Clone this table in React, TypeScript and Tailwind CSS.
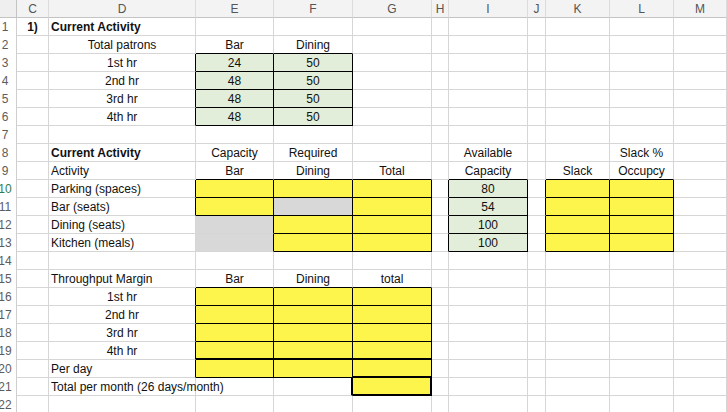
import React from 'react';

type Fill = 'y' | 'g' | 'x';
type Cell = { t?: string; a?: 'l' | 'c'; b?: boolean; f?: Fill };
type Row = Partial<Record<string, Cell>>;

const COLS = ['C', 'D', 'E', 'F', 'G', 'H', 'I', 'J', 'K', 'L', 'M'];

const c = (t: string, extra: Partial<Cell> = {}): Cell => ({ t, a: 'c', ...extra });
const l = (t: string, extra: Partial<Cell> = {}): Cell => ({ t, a: 'l', ...extra });
const Y: Cell = { f: 'y' };
const G: Cell = { f: 'x' };

// rows 1..22
const rows: Row[] = [
  { C: c('1)', { b: true }), D: l('Current Activity', { b: true }) },
  { D: c('Total patrons'), E: c('Bar'), F: c('Dining') },
  { D: c('1st hr'), E: c('24', { f: 'g' }), F: c('50', { f: 'g' }) },
  { D: c('2nd hr'), E: c('48', { f: 'g' }), F: c('50', { f: 'g' }) },
  { D: c('3rd hr'), E: c('48', { f: 'g' }), F: c('50', { f: 'g' }) },
  { D: c('4th hr'), E: c('48', { f: 'g' }), F: c('50', { f: 'g' }) },
  {},
  { D: l('Current Activity', { b: true }), E: c('Capacity'), F: c('Required'), I: c('Available'), L: c('Slack %') },
  { D: l('Activity'), E: c('Bar'), F: c('Dining'), G: c('Total'), I: c('Capacity'), K: c('Slack'), L: c('Occupcy') },
  { D: l('Parking (spaces)'), E: Y, F: Y, G: Y, I: c('80', { f: 'g' }), K: Y, L: Y },
  { D: l('Bar (seats)'), E: Y, F: G, G: Y, I: c('54', { f: 'g' }), K: Y, L: Y },
  { D: l('Dining (seats)'), E: G, F: Y, G: Y, I: c('100', { f: 'g' }), K: Y, L: Y },
  { D: l('Kitchen (meals)'), E: G, F: Y, G: Y, I: c('100', { f: 'g' }), K: Y, L: Y },
  {},
  { D: l('Throughput Margin'), E: c('Bar'), F: c('Dining'), G: c('total') },
  { D: c('1st hr'), E: Y, F: Y, G: Y },
  { D: c('2nd hr'), E: Y, F: Y, G: Y },
  { D: c('3rd hr'), E: Y, F: Y, G: Y },
  { D: c('4th hr'), E: Y, F: Y, G: Y },
  { D: l('Per day'), E: Y, F: Y, G: Y },
  { D: l('Total per month (26 days/month)'), G: Y },
  {},
];

const isBoxed = (r: number, ci: number) => {
  const cell = rows[r]?.[COLS[ci]];
  return !!cell && (cell.f === 'y' || cell.f === 'g');
};

// thick edges (row index is 0-based)
const thickBottom = (r: number, col: string) =>
  (r === 18 && (col === 'E' || col === 'F' || col === 'G')) || (r === 19 && col === 'G') || (r === 20 && col === 'G');
const thickRight = (r: number, col: string) => r === 20 && (col === 'F' || col === 'G');

function GridCell({ r, ci }: { r: number; ci: number }) {
  const col = COLS[ci];
  const cell = rows[r][col] ?? {};
  const bBlack = isBoxed(r, ci) || isBoxed(r + 1, ci);
  const rBlack = isBoxed(r, ci) || isBoxed(r, ci + 1);

  const bottom = thickBottom(r, col)
    ? 'border-b-2 border-b-black'
    : bBlack
      ? 'border-b border-b-black'
      : 'border-b border-b-[#d6d6d6]';
  const right = thickRight(r, col)
    ? 'border-r-2 border-r-black'
    : rBlack
      ? 'border-r border-r-black'
      : 'border-r border-r-[#d6d6d6]';
  const bg =
    cell.f === 'y' ? 'bg-[#fdf54c]' : cell.f === 'g' ? 'bg-[#e2eed9]' : cell.f === 'x' ? 'bg-[#d8d8d8]' : '';

  return (
    <div
      className={`h-[18px] flex items-center whitespace-nowrap ${bottom} ${right} ${bg} ${
        cell.a === 'l' ? 'justify-start pl-[2px]' : 'justify-center'
      } ${cell.b ? 'font-bold' : ''}`}
    >
      {cell.t && <span className="relative z-10">{cell.t}</span>}
    </div>
  );
}

export default function App() {
  return (
    <div
      className="w-[727px] h-[412px] overflow-hidden bg-white text-[12px] text-[#111]"
      style={{ fontFamily: '"Liberation Sans", Arial, sans-serif' }}
    >
      <div className="grid grid-cols-[17px_32px_147px_78px_79px_79px_17px_79px_18px_64px_64px_1fr]">
        {/* column headers */}
        <div className="h-[18px] bg-[#efefef] border-b border-r border-[#c4c4c4]" />
        {COLS.map((col) => (
          <div
            key={col}
            className="h-[18px] bg-[#f3f3f3] border-b border-b-[#c4c4c4] border-r border-r-[#dcdcdc] flex items-center justify-center text-[#555]"
          >
            {col}
          </div>
        ))}

        {rows.map((_, r) => (
          <React.Fragment key={r}>
            <div className="h-[18px] overflow-hidden border-r border-r-[#cfcfcf] bg-white">
              <div
                className={`w-[10px] h-full flex items-center justify-center ${
                  r === 9 ? 'text-[#2e7d4f]' : 'text-[#5c5c5c]'
                }`}
              >
                {r + 1}
              </div>
            </div>
            {COLS.map((_, ci) => (
              <GridCell key={ci} r={r} ci={ci} />
            ))}
          </React.Fragment>
        ))}
      </div>
    </div>
  );
}
